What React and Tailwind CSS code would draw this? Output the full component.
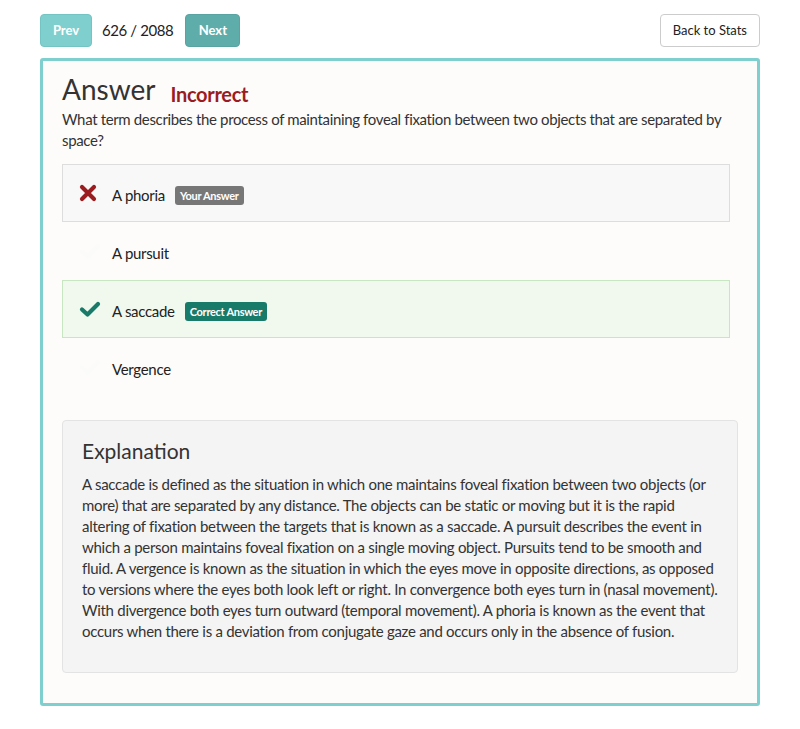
import React from 'react';

const options = [
    { text: 'A phoria', status: 'wrong' },
    { text: 'A pursuit', status: 'none' },
    { text: 'A saccade', status: 'correct' },
    { text: 'Vergence', status: 'none' },
];

function Cross() {
    return (
        <svg width="18" height="18" viewBox="0 0 18 18">
            <path d="M3 3 L15 15 M15 3 L3 15" stroke="#9b1c1f" strokeWidth="4.2" strokeLinecap="round" />
        </svg>
    );
}

function Check({ color }) {
    return (
        <svg width="22" height="18" viewBox="0 0 22 18">
            <path d="M3 9.5 L8.5 14.5 L19 4" stroke={color} strokeWidth="4.2" fill="none" strokeLinecap="round" strokeLinejoin="round" />
        </svg>
    );
}

function OptionRow({ option }) {
    let rowClass = 'border border-transparent';
    if (option.status === 'wrong') rowClass = 'bg-[#f8f8f8] border border-[#dddddd]';
    if (option.status === 'correct') rowClass = 'bg-[#f1f9ef] border border-[#c9e6c3]';

    return (
        <div className={`flex items-center h-[58px] pl-[16px] ${rowClass}`}>
            <div className="w-[33px] flex justify-start">
                {option.status === 'wrong' && <Cross />}
                {option.status === 'correct' && <Check color="#187a68" />}
                {option.status === 'none' && <Check color="#fbfbf9" />}
            </div>
            <div className="flex items-center pt-[5px]">
                <span className="text-[15px] tracking-[-0.3px] text-[#222]">{option.text}</span>
                {option.status === 'wrong' && (
                    <span className="ml-[10px] bg-[#777777] text-white text-[11px] tracking-[-0.3px] font-bold px-[5px] py-[2px] rounded-[3px] leading-[15px]">Your Answer</span>
                )}
                {option.status === 'correct' && (
                    <span className="ml-[10px] bg-[#187a68] text-white text-[11px] tracking-[-0.3px] font-bold px-[5px] py-[2px] rounded-[3px] leading-[15px]">Correct Answer</span>
                )}
            </div>
        </div>
    );
}

export default function App() {
    return (
        <div className="min-h-screen bg-white px-10 pt-[14px] font-['Lato','Liberation_Sans',sans-serif] text-[#333]">
            <div className="flex items-center justify-between">
                <div className="flex items-center">
                    <button className="h-[33px] w-[52px] rounded-[4px] bg-[#7fcfcf] border border-[#74c4c4] text-white text-[13px] font-bold">Prev</button>
                    <span className="ml-[10px] mr-[12px] text-[15px] tracking-[-0.4px] text-[#222]">626 / 2088</span>
                    <button className="h-[33px] w-[55px] rounded-[4px] bg-[#5fadab] border border-[#58a4a2] text-white text-[13px] font-bold">Next</button>
                </div>
                <button className="h-[33px] px-[12px] rounded-[4px] bg-white border border-[#cccccc] text-[#222] text-[13px]">Back to Stats</button>
            </div>

            <div className="mt-[11px] border-[3px] border-[#7fcfcf] rounded-[3px] bg-[#fdfcfa] pl-[19px] pr-[19px] pt-[8px] pb-[30px]">
                <div className="flex items-end">
                    <h1 className="text-[28px] leading-[40px] text-[#333]">Answer</h1>
                    <span className="ml-[15px] text-[20px] font-bold tracking-[-0.3px] text-[#9b1c1f] leading-[29px]">Incorrect</span>
                </div>
                <p className="text-[15px] leading-[21px] tracking-[-0.35px] text-[#333]">What term describes the process of maintaining foveal fixation between two objects that are separated by space?</p>

                <div className="mt-[13px] mr-[8px] flex flex-col">
                    {options.map((o) => (
                        <OptionRow key={o.text} option={o} />
                    ))}
                </div>

                <div className="mt-[24px] bg-[#f4f4f4] border border-[#e3e3e3] rounded-[4px] px-[19px] pt-[17px] pb-[30px]">
                    <h2 className="text-[21px] leading-[26px] text-[#333] mb-[10px]">Explanation</h2>
                    <p className="text-[15px] leading-[21px] tracking-[-0.28px] text-[#333]">
                        A saccade is defined as the situation in which one maintains foveal fixation between two objects (or more) that are separated by any distance. The objects can be static or moving but it is the rapid altering of fixation between the targets that is known as a saccade. A pursuit describes the event in which a person maintains foveal fixation on a single moving object. Pursuits tend to be smooth and fluid. A vergence is known as the situation in which the eyes move in opposite directions, as opposed to versions where the eyes both look left or right. In convergence both eyes turn in (nasal movement). With divergence both eyes turn outward (temporal movement). A phoria is known as the event that occurs when there is a deviation from conjugate gaze and occurs only in the absence of fusion.
                    </p>
                </div>
            </div>
        </div>
    );
}
